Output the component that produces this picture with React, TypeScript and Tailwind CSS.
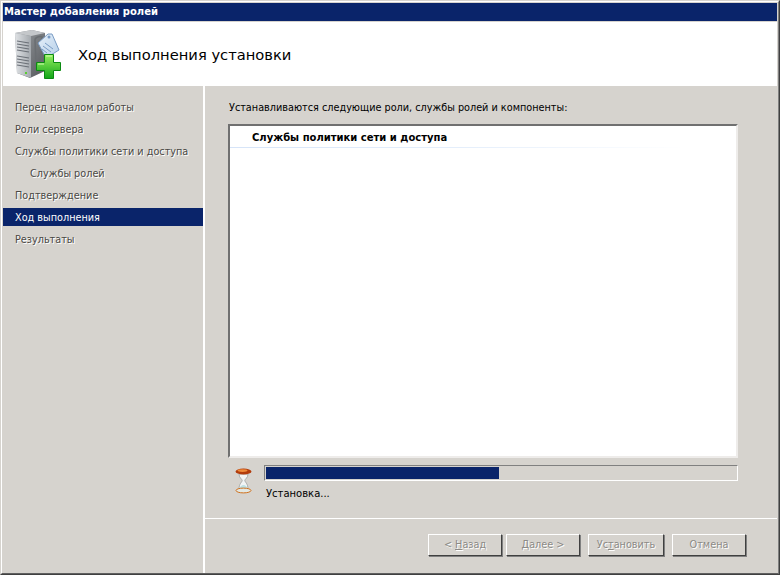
import React from "react";

const steps = [
  { label: "Перед началом работы" },
  { label: "Роли сервера" },
  { label: "Службы политики сети и доступа" },
  { label: "Службы ролей", sub: true },
  { label: "Подтверждение" },
  { label: "Ход выполнения", active: true },
  { label: "Результаты" },
];

const ServerIcon = () => (
  <svg width="48" height="52" viewBox="0 0 48 52" className="shrink-0">
    <defs>
      <linearGradient id="srv" x1="0" y1="0" x2="1" y2="0">
        <stop offset="0" stopColor="#dfe2e5" />
        <stop offset="1" stopColor="#a4a9ae" />
      </linearGradient>
      <linearGradient id="side" x1="0" y1="0" x2="1" y2="1">
        <stop offset="0" stopColor="#9a9ea2" />
        <stop offset="1" stopColor="#55585c" />
      </linearGradient>
      <linearGradient id="plus" x1="0" y1="0" x2="0" y2="1">
        <stop offset="0" stopColor="#96f060" />
        <stop offset="1" stopColor="#12a518" />
      </linearGradient>
      <linearGradient id="tag" x1="0" y1="0" x2="1" y2="1">
        <stop offset="0" stopColor="#e6f0fa" />
        <stop offset="1" stopColor="#b6cfe8" />
      </linearGradient>
    </defs>
    <path d="M1 5 L18 2 L31 5 L31 43 L16 50 L3 45 Z" fill="url(#side)" />
    <path d="M1 5 L18 2 L31 5 L17 8 Z" fill="#c4c7ca" />
    <path d="M1 5 L17 8 L17 50 L3 45 Z" fill="url(#srv)" />
    <path d="M3 13 L15 15 M3 16 L15 18 M3 19 L15 21 M3 22 L15 24 M3 28 L15 30 M3 31 L15 33 M3 34 L15 36 M3 37 L15 39" stroke="#6b7077" strokeWidth="1.2" />
    <rect x="11" y="44" width="2" height="2" fill="#58d030" />
    <path d="M21 12 C21 9 26 8 28 9 L28 34 L22 36 Z" fill="none" stroke="#6a6e72" strokeWidth="1.5" />
    <path d="M24 15 L34 6 L38 6 L45 22 L32 30 Z" fill="url(#tag)" stroke="#7a9cc4" />
    <circle cx="35" cy="9" r="1.5" fill="#7a9cc4" />
    <path d="M31 15 L39 21 M29 18 L37 24 M28 21 L33 25" stroke="#7a9cc4" />
    <path d="M30.5 26.5 h9 v8 h7 v8 h-7 v8 h-9 v-8 h-8 v-8 h8 Z" fill="url(#plus)" stroke="#0b8a12" />
    <path d="M32 28 h6 M24 36 h6" stroke="#d0ffb0" strokeWidth="1" />
  </svg>
);

const Hourglass = () => (
  <svg width="17" height="26" viewBox="0 0 17 26" className="block">
    <path d="M4 6 H13 C13 10 9.8 11 9.8 12.5 C9.8 14 13 15.5 13 21 H4 C4 15.5 7.2 14 7.2 12.5 C7.2 11 4 10 4 6 Z" fill="#f2f4f4" stroke="#9a9e9e" strokeWidth="0.8" />
    <path d="M4.6 21 C5 18 7 17 8.5 17 C10 17 12 18 12.4 21 Z" fill="#bde0e4" />
    <ellipse cx="8.5" cy="3.5" rx="8" ry="3" fill="#b23c0c" />
    <ellipse cx="7.5" cy="2.6" rx="5" ry="1.3" fill="#ee8a3a" />
    <ellipse cx="8.5" cy="22.5" rx="7.5" ry="2.4" fill="#e2e8e4" stroke="#d0701c" />
  </svg>
);

const Btn = ({ w, children }: { w: string; children: React.ReactNode }) => (
  <div className={`${w} h-[22px] flex items-center justify-center border border-t-white border-l-white border-r-[#404040] border-b-[#404040] shadow-[1px_1px_0_#808080] text-[9.7px] text-[#8c8a86] [text-shadow:1px_1px_0_#fff]`}>
    {children}
  </div>
);

export default function App() {
  return (
    <div className="w-[780px] h-[575px] font-['DejaVu_Sans',sans-serif] border border-t-[#d6d3ce] border-l-[#d6d3ce] border-r-[#404040] border-b-[#404040]">
      <div className="h-full bg-[#d6d3ce] flex flex-col pt-px pl-px pr-px border border-t-white border-l-white border-r-[#808080] border-b-[#606060] overflow-hidden">
        <div className="h-[18px] bg-[#0a246a] text-white font-bold text-[10px] leading-[18px] pl-px shrink-0">
          Мастер добавления ролей
        </div>
        <div className="h-[64px] mt-px bg-white flex items-center shrink-0 pl-[11px]">
          <ServerIcon />
          <span className="ml-[16px] text-[14.7px] text-black mt-[3px]">Ход выполнения установки</span>
        </div>
        <div className="flex flex-1 min-h-0">
          <div className="w-[200px] shrink-0 pt-[10px] text-[9.7px]">
            {steps.map((s) =>
              s.active ? (
                <div key={s.label} className="h-[18px] my-[2px] leading-[20px] pl-[12px] bg-[#0a246a] text-white">
                  {s.label}
                </div>
              ) : (
                <div
                  key={s.label}
                  className={`h-[22px] leading-[24px] ${s.sub ? "pl-[27px]" : "pl-[12px]"} text-[#4a4844] [text-shadow:1px_1px_0_#fff]`}
                >
                  {s.label}
                </div>
              )
            )}
          </div>
          <div className="flex-1 border-l-2 border-l-white flex flex-col min-w-0">
            <div className="flex-1 pl-[23px] pr-[39px] pt-[15px] flex flex-col min-h-0">
              <div className="pl-px text-[9.7px] leading-[14px] text-black">
                Устанавливаются следующие роли, службы ролей и компоненты:
              </div>
              <div className="mt-[9px] h-[334px] bg-white border-2 border-t-[#707070] border-l-[#707070] border-b-[#eeecea] border-r-[#eeecea]">
                <div className="h-[21px] pt-px pl-[22px] flex items-center font-bold text-[10px] text-black">
                  Службы политики сети и доступа
                </div>
                <div className="h-px bg-gradient-to-r from-[#d6e4f8] via-[#e4eefb] to-white w-[455px]"></div>
              </div>
              <div className="mt-[7px] flex">
                <div className="w-[36px] shrink-0 pl-[7px] pt-[3px]">
                  <Hourglass />
                </div>
                <div className="flex-1">
                  <div className="h-[16px] border border-t-[#808080] border-l-[#808080] border-r-white border-b-white p-px">
                    <div className="h-full w-[233px] bg-[#0a246a]"></div>
                  </div>
                  <div className="mt-[6px] pl-[2px] text-[10px] leading-[14px] text-black">Установка...</div>
                </div>
              </div>
            </div>
            <div className="h-px bg-white shrink-0"></div>
            <div className="h-[54px] shrink-0 flex pl-[223px] pt-[15px]">
              <Btn w="w-[74px]">
                &lt;&nbsp;<u>Н</u>азад
              </Btn>
              <div className="w-[4px]"></div>
              <Btn w="w-[74px]">
                <u>Д</u>алее &gt;
              </Btn>
              <div className="w-[8px]"></div>
              <Btn w="w-[76px]">
                Ус<u>т</u>ановить
              </Btn>
              <div className="w-[8px]"></div>
              <Btn w="w-[74px]">Отмена</Btn>
            </div>
          </div>
        </div>
      </div>
    </div>
  );
}
